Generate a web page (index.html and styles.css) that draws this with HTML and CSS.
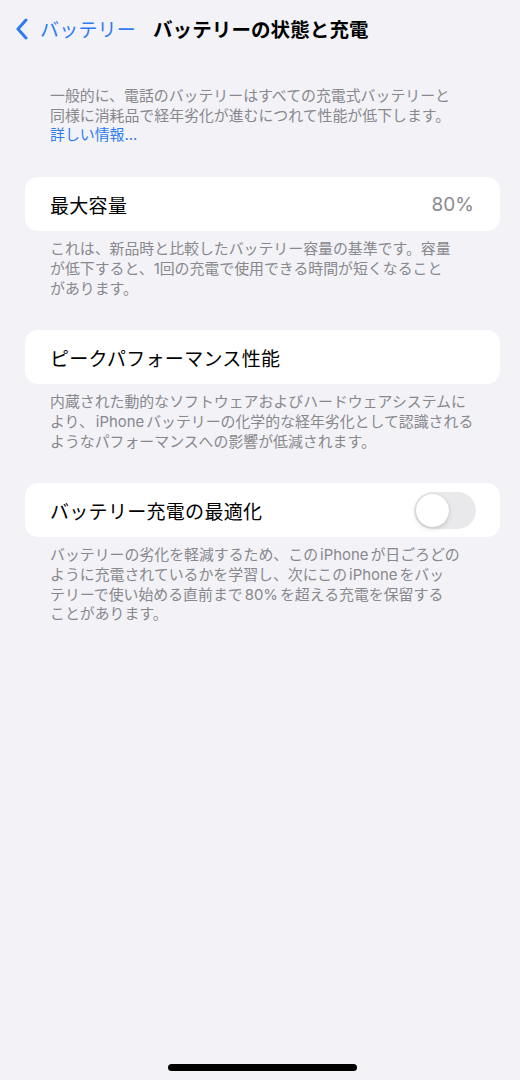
FILE: index.html
```html
<!DOCTYPE html>
<html lang="ja">
<head>
<meta charset="utf-8">
<title>バッテリーの状態と充電</title>
<link rel="stylesheet" href="styles.css">
</head>
<body>
<div class="screen">
  <header class="nav">
    <a class="back" href="#">
      <svg class="chevron" width="14" height="22" viewBox="0 0 14 22" aria-hidden="true">
        <path d="M11 2 L3 11 L11 20" fill="none" stroke="currentColor" stroke-width="3" stroke-linecap="round" stroke-linejoin="round"/>
      </svg>
      <span>バッテリー</span>
    </a>
    <h1 class="title">バッテリーの状態と充電</h1>
  </header>

  <main class="content">
    <p class="note intro">一般的に、電話のバッテリーはすべての充電式バッテリーと<br>同様に消耗品で経年劣化が進むにつれて性能が低下します。<br><a class="link" href="#">詳しい情報...</a></p>

    <section class="group">
      <div class="cell">
        <span class="label">最大容量</span>
        <span class="value">80%</span>
      </div>
      <p class="note">これは、新品時と比較したバッテリー容量の基準です。容量<br>が低下すると、1回の充電で使用できる時間が短くなること<br>があります。</p>
    </section>

    <section class="group">
      <div class="cell">
        <span class="label">ピークパフォーマンス性能</span>
      </div>
      <p class="note">内蔵された動的なソフトウェアおよびハードウェアシステムに<br>より、<span class="latin">iPhone</span>バッテリーの化学的な経年劣化として認識される<br>ようなパフォーマンスへの影響が低減されます。</p>
    </section>

    <section class="group">
      <div class="cell">
        <span class="label">バッテリー充電の最適化</span>
        <span class="switch" role="switch" aria-checked="false"><span class="knob"></span></span>
      </div>
      <p class="note">バッテリーの劣化を軽減するため、この<span class="latin">iPhone</span>が日ごろどの<br>ように充電されているかを学習し、次にこの<span class="latin">iPhone</span>をバッ<br>テリーで使い始める直前まで<span class="latin">80%</span>を超える充電を保留する<br>ことがあります。</p>
    </section>
  </main>

  <div class="home-indicator"></div>
</div>
</body>
</html>
```

FILE: styles.css
```css
* {
  box-sizing: border-box;
}

html, body {
  margin: 0;
  padding: 0;
}

body {
  background: #f2f2f7;
  font-family: Inter, "Noto Sans CJK JP", sans-serif;
  color: #000;
}

.screen {
  position: relative;
  width: 520px;
  height: 1080px;
  overflow: hidden;
}

/* navigation bar */
.nav {
  height: 56px;
  display: flex;
  align-items: center;
  padding-left: 15px;
  gap: 17px;
}

.back {
  display: flex;
  align-items: center;
  gap: 11px;
  color: #2f7cf0;
  text-decoration: none;
  font-size: 19px;
  letter-spacing: 0.2px;
}

.chevron {
  display: block;
  margin-top: 1px;
}

.title {
  margin: 0;
  font-size: 19.5px;
  font-weight: 700;
  letter-spacing: 0.1px;
}

/* grouped list */
.content {
  padding: 0 20px 0 25px;
}

.note {
  margin: 0;
  padding: 0 0 0 25px;
  font-size: 14.9px;
  line-height: 19.7px;
  color: #88888d;
  white-space: nowrap;
}

/* Latin words inside Japanese text get a little breathing room */
.latin {
  margin: 0 2px;
}

.intro {
  margin-top: 31px;
}

.link {
  color: #2f7cf0;
  text-decoration: none;
}

.group {
  margin-top: 31px;
}

.cell {
  width: 475px;
  height: 54px;
  background: #fff;
  border-radius: 13px;
  display: flex;
  align-items: center;
  justify-content: space-between;
  padding: 0 24px 0 25px;
}

.group .note {
  margin-top: 9px;
}

.label {
  font-size: 19px;
  letter-spacing: 0.3px;
}

.value {
  font-size: 19px;
  color: #8a8a8e;
  padding-right: 2px;
}

/* toggle, off state */
.switch {
  position: relative;
  width: 62px;
  height: 37px;
  border-radius: 19px;
  background: #e9e9eb;
}

.knob {
  position: absolute;
  top: 2px;
  left: 2px;
  width: 33px;
  height: 33px;
  border-radius: 50%;
  background: #fff;
  box-shadow: 0 2px 5px rgba(0, 0, 0, 0.15), 0 0 1px rgba(0, 0, 0, 0.12);
}

.home-indicator {
  position: absolute;
  left: 168px;
  bottom: 9px;
  width: 189px;
  height: 7px;
  border-radius: 4px;
  background: #000;
}
```
